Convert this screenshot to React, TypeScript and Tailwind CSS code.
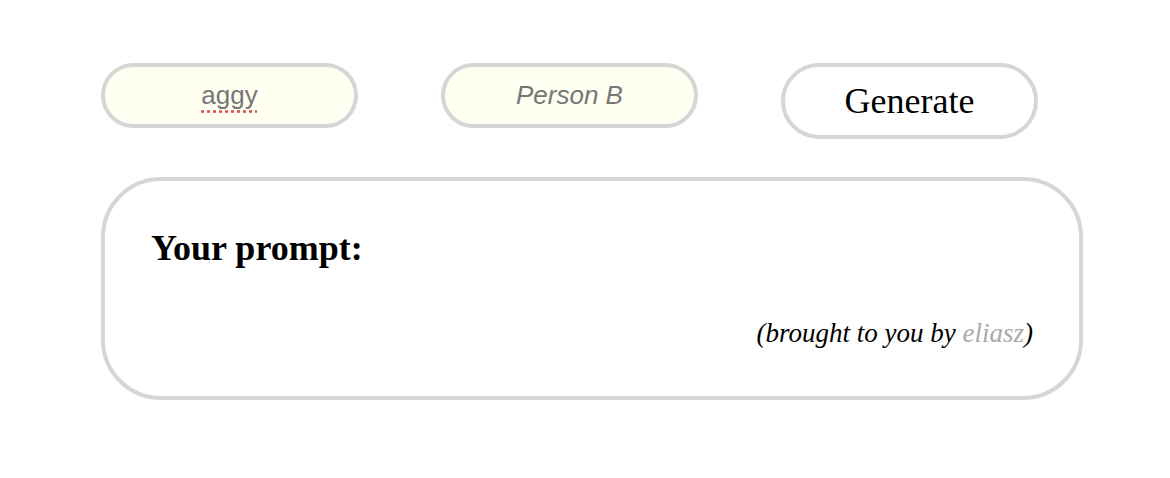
import React from 'react';

export default function App() {
  return (
    <div className="min-h-[478px] w-[1170px] bg-white pt-[63px] pl-[101px]">
      <div className="flex items-start gap-[83px]">
        <div className="flex h-[65px] w-[257px] items-center justify-center rounded-full border-4 border-[#d6d6d6] bg-[#fffff2]">
          <span className="text-[26px] text-[#777] underline decoration-dotted decoration-[#d9534f] underline-offset-[6px] [font-family:'Liberation_Sans',Arial,sans-serif]">
            aggy
          </span>
        </div>
        <div className="flex h-[65px] w-[257px] items-center justify-center rounded-full border-4 border-[#d6d6d6] bg-[#fffff2]">
          <span className="text-[26px] italic text-[#777] [font-family:'Liberation_Sans',Arial,sans-serif]">Person B</span>
        </div>
        <button className="flex h-[76px] w-[257px] items-center justify-center rounded-full border-4 border-[#d6d6d6] bg-white text-[36px] text-black [font-family:'Liberation_Serif','Times_New_Roman',serif]">
          Generate
        </button>
      </div>

      <div className="mt-[38px] flex h-[223px] w-[982px] flex-col rounded-[60px] border-4 border-[#d6d6d6] px-[46px] pt-[45px] [font-family:'Liberation_Serif','Times_New_Roman',serif]">
        <h2 className="text-[36px] font-bold leading-tight text-black">Your prompt:</h2>
        <p className="mt-[42px] text-right text-[27px] italic text-black">
          (brought to you by <span className="text-[#aaa]">eliasz</span>)
        </p>
      </div>
    </div>
  );
}
